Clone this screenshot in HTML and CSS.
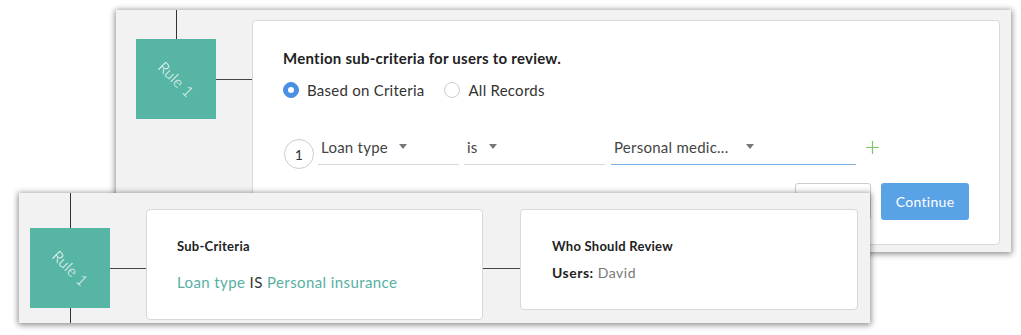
FILE: index.html
```html
<!DOCTYPE html>
<html lang="en">
<head>
    <meta charset="UTF-8">
    <title>Review Rule</title>
    <link rel="stylesheet" href="styles.css">
</head>
<body>
    <!-- Editing view -->
    <div class="panel panel-top">
        <div class="rule-col">
            <div class="vline vline-top"></div>
            <div class="rule"><span>Rule 1</span></div>
        </div>
        <div class="hconn"></div>
        <div class="card card-edit">
            <h3 class="card-title">Mention sub-criteria for users to review.</h3>
            <div class="radio-row">
                <label class="radio checked"><span class="dot"></span>Based on Criteria</label>
                <label class="radio"><span class="dot"></span>All Records</label>
            </div>
            <div class="criteria-row">
                <span class="num">1</span>
                <div class="field field-a">Loan type <i class="caret"></i></div>
                <div class="field field-b">is <i class="caret"></i></div>
                <div class="field field-c active">Personal medic... <i class="caret"></i></div>
                <svg class="plus" width="13" height="13" viewBox="0 0 13 13">
                    <path d="M6.5 0v13M0 6.5h13" stroke="#7fc46e" stroke-width="1.2" fill="none"/>
                </svg>
            </div>
            <div class="actions">
                <button class="btn btn-cancel">Cancel</button>
                <button class="btn btn-primary">Continue</button>
            </div>
        </div>
    </div>

    <!-- Summary view -->
    <div class="panel panel-bottom">
        <div class="rule-col">
            <div class="vline vline-short"></div>
            <div class="rule"><span>Rule 1</span></div>
            <div class="vline vline-fill"></div>
        </div>
        <div class="hconn hconn-low"></div>
        <div class="card card-sub">
            <h4 class="card-label">Sub-Criteria</h4>
            <p class="summary"><span class="hl">Loan type</span> IS <span class="hl">Personal insurance</span></p>
        </div>
        <div class="hconn hconn-low hconn-mid"></div>
        <div class="card card-who">
            <h4 class="card-label">Who Should Review</h4>
            <p class="users"><b>Users:</b> David</p>
        </div>
    </div>
</body>
</html>
```

FILE: styles.css
```css
body {
    margin: 0;
    width: 1021px;
    height: 335px;
    overflow: hidden;
    background: #fff;
    font-family: Lato, "Open Sans", Arial, sans-serif;
    color: #333;
    letter-spacing: 0.25px;
}

.panel {
    display: flex;
    align-items: flex-start;
    background: #f2f2f2;
    box-shadow: 0 1px 6px 1px rgba(0, 0, 0, 0.45);
    box-sizing: border-box;
}

.panel-top {
    margin: 10px 0 0 116px;
    width: 895px;
    height: 242px;
}

.panel-bottom {
    position: relative;
    margin: -59px 0 0 19px;
    width: 851px;
    height: 130px;
}

/* rule block with its lines */
.rule-col {
    display: flex;
    flex-direction: column;
    align-items: center;
    width: 80px;
    height: 100%;
}

.panel-top .rule-col { margin-left: 20px; }
.panel-bottom .rule-col { margin-left: 11px; }

.vline {
    width: 1px;
    background: #333;
}

.vline-top { height: 29px; }
.vline-short { height: 35px; }
.vline-fill { flex: 1; }

.rule {
    width: 80px;
    height: 80px;
    flex: none;
    background: #57b5a5;
    display: flex;
    align-items: center;
    justify-content: center;
}

.rule span {
    color: #fff;
    font-size: 15px;
    font-weight: 300;
    transform: rotate(45deg);
    letter-spacing: 0.3px;
}

.hconn {
    width: 36px;
    height: 1px;
    margin-top: 69px;
    background: #444;
}

.hconn-low { margin-top: 75px; }
.hconn-mid { width: 37px; }

.card {
    background: #fff;
    border: 1px solid #d9d9d9;
    border-radius: 4px;
    box-sizing: border-box;
}

/* top card */
.card-edit {
    margin-top: 10px;
    width: 748px;
    height: 225px;
    padding: 27px 0 0 30px;
    position: relative;
}

.card-title {
    margin: 0;
    font-size: 15px;
    font-weight: 700;
    line-height: 20px;
    color: #222;
}

.radio-row {
    display: flex;
    gap: 20px;
    margin-top: 12px;
}

.radio {
    display: flex;
    align-items: center;
    font-size: 15px;
    line-height: 20px;
    color: #333;
}

.radio .dot {
    width: 16px;
    height: 16px;
    border-radius: 50%;
    border: 1px solid #ccc;
    box-sizing: border-box;
    margin-right: 8px;
    position: relative;
}

.radio.checked .dot {
    background: #4a8fe3;
    border-color: #4a8fe3;
}

.radio.checked .dot::after {
    content: "";
    position: absolute;
    left: 4px;
    top: 4px;
    width: 6px;
    height: 6px;
    border-radius: 50%;
    background: #fff;
}

.criteria-row {
    display: flex;
    align-items: flex-end;
    margin-top: 36px;
    margin-left: 1px;
}

.num {
    width: 30px;
    height: 30px;
    border: 1px solid #ccc;
    border-radius: 50%;
    box-sizing: border-box;
    display: flex;
    align-items: center;
    justify-content: center;
    font-size: 14px;
    color: #333;
    margin-right: 4px;
    margin-bottom: -4px;
}

.field {
    display: flex;
    align-items: center;
    padding: 0 0 6px 3px;
    border-bottom: 1px solid #d6d6d6;
    font-size: 15px;
    color: #444;
    box-sizing: border-box;
    height: 29px;
}

.field-a { width: 141px; margin-right: 5px; }
.field-b { width: 141px; margin-right: 6px; }
.field-c { width: 245px; }
.field.active { border-bottom-color: #7fb2e5; }

.caret {
    width: 0;
    height: 0;
    border-left: 4px solid transparent;
    border-right: 4px solid transparent;
    border-top: 5px solid #777;
    margin-left: 11px;
    margin-top: -2px;
}

.field-c .caret { margin-left: 18px; }

.plus {
    margin: 0 0 11px 10px;
}

.actions {
    position: absolute;
    right: 30px;
    top: 162px;
    display: flex;
    gap: 10px;
}

.btn {
    height: 37px;
    border-radius: 3px;
    font-family: inherit;
    font-size: 14px;
    letter-spacing: 0.3px;
    padding: 0;
}

.btn-cancel {
    width: 76px;
    background: #fff;
    border: 1px solid #ccc;
    color: #555;
}

.btn-primary {
    width: 88px;
    background: #5aa2e6;
    border: none;
    color: #fff;
}

/* bottom cards */
.card-sub {
    margin-top: 16px;
    width: 337px;
    height: 111px;
    padding: 27px 0 0 30px;
}

.card-who {
    margin-top: 16px;
    width: 338px;
    height: 101px;
    padding: 27px 0 0 31px;
}

.card-label {
    margin: 0;
    font-size: 13px;
    font-weight: 700;
    line-height: 18px;
    color: #222;
}

.summary {
    margin: 17px 0 0;
    font-size: 15px;
    line-height: 20px;
    color: #333;
    letter-spacing: 0.4px;
}

.summary .hl { color: #57b0a3; }

.users {
    margin: 9px 0 0;
    font-size: 14px;
    line-height: 18px;
    color: #777;
    letter-spacing: 0.5px;
}

.users b {
    color: #222;
}
```
